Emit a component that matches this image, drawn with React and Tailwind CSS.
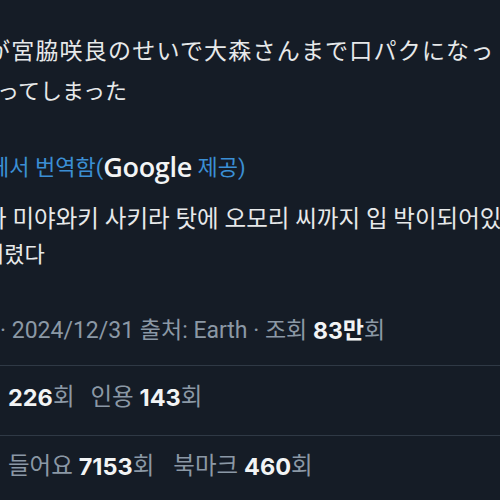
export default function App() {
  const jp = { fontFamily: "'Noto Sans CJK JP', 'Noto Sans', sans-serif" };
  const kr = { fontFamily: "Roboto, 'Noto Sans CJK KR', sans-serif" };
  const num = { fontFamily: "Inter, Roboto, 'Noto Sans CJK KR', sans-serif" };
  return (
    <div className="w-[500px] h-[500px] overflow-hidden bg-[#151c26] text-[#e7e9ea]">
      <div className="pt-[29px]" style={jp}>
        <div className="h-[40px] flex items-center whitespace-nowrap text-[23px] tracking-[1.2px] -ml-[13px]">
          が宮脇咲良のせいで大森さんまで口パクになっ
        </div>
        <div className="h-[40px] flex items-center whitespace-nowrap text-[22px] -ml-[3px]">
          ってしまった
        </div>
      </div>
      <div style={kr}>
        <div className="mt-[38px] h-[40px] flex items-center whitespace-nowrap -ml-[11px]">
          <span className="text-[22px] text-[#3b8fd4]">에서 번역함(</span>
          <span className="text-[27px] font-semibold text-[#f2f4f5] tracking-[-0.3px]" style={{ fontFamily: "'Open Sans', Roboto, sans-serif" }}>Google</span>
          <span className="text-[22px] text-[#3b8fd4]">&nbsp;제공)</span>
        </div>
        <div className="mt-[16px] h-[34px] flex items-center whitespace-nowrap text-[23.5px] -ml-[15px]">
          가 미야와키 사키라 탓에 오모리 씨까지 입 박이되어있었다
        </div>
        <div className="h-[34px] flex items-center whitespace-nowrap text-[22px] -ml-[16px]">
          버렸다
        </div>
        <div className="mt-[40px] h-[40px] flex items-center whitespace-nowrap text-[23px] text-[#8b98a5]">
          <span>·&nbsp;2024/12/31 출처: Earth · 조회&nbsp;</span>
          <span className="font-bold text-[#f2f4f5]" style={num}>83</span>
          <span className="font-bold text-[#f2f4f5]">만</span>
          <span>회</span>
        </div>
        <div className="mt-[14px] h-px bg-[#2f3945]" />
        <div className="mt-[12px] h-[40px] flex items-center whitespace-nowrap text-[23.5px] text-[#8b98a5] pl-[8px]">
          <span className="font-bold text-[#f2f4f5]" style={num}>226</span>
          <span>회</span>
          <span className="ml-[16px]">인용&nbsp;</span>
          <span className="font-bold text-[#f2f4f5]" style={num}>143</span>
          <span>회</span>
        </div>
        <div className="mt-[17px] h-px bg-[#2f3945]" />
        <div className="mt-[11px] h-[40px] flex items-center whitespace-nowrap text-[23.5px] text-[#8b98a5] pl-[8px]">
          <span>들어요&nbsp;</span>
          <span className="font-bold text-[#f2f4f5]" style={num}>7153</span>
          <span>회</span>
          <span className="ml-[19px]">북마크&nbsp;</span>
          <span className="font-bold text-[#f2f4f5]" style={num}>460</span>
          <span>회</span>
        </div>
      </div>
    </div>
  );
}
